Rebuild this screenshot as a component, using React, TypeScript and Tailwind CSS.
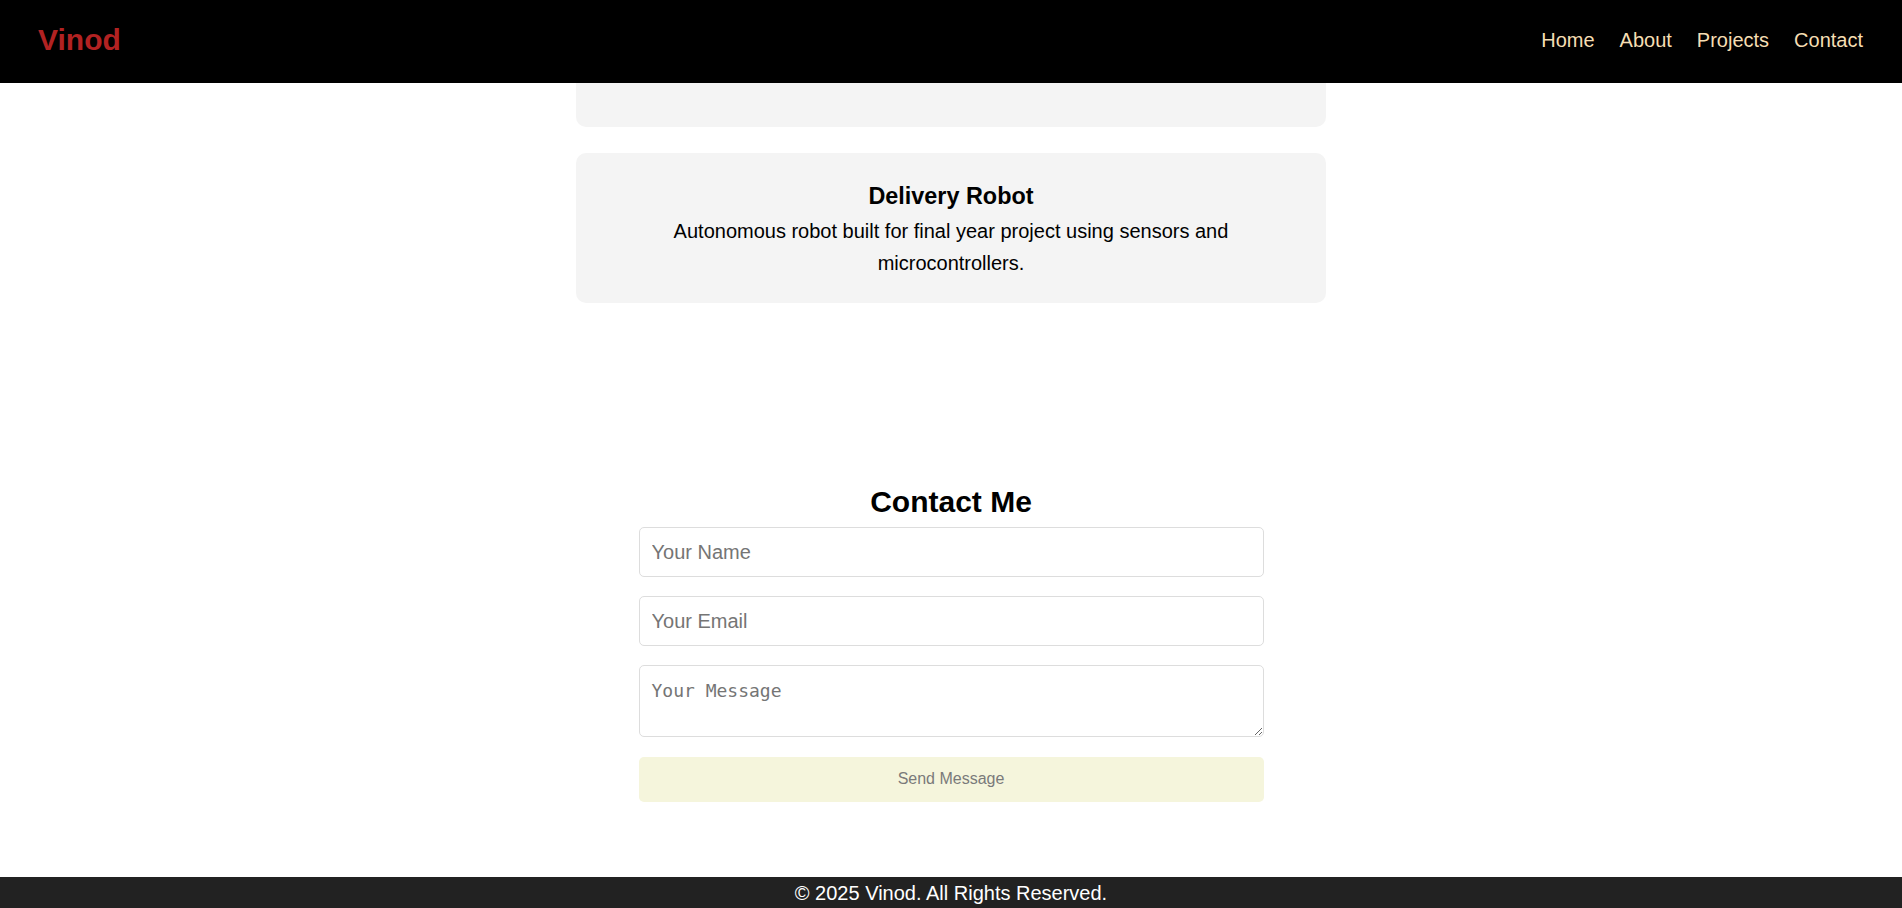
import React from 'react'

const links = ['Home', 'About', 'Projects', 'Contact']

export default function App() {
  return (
    <div className="min-h-screen bg-white text-black font-['Liberation_Sans',Arial,sans-serif]">
      {/* top bar */}
      <header className="h-[83px] bg-black flex items-center justify-between pl-[38px] pr-[39px] pb-1">
        <span className="text-[30px] font-bold text-[#b22222]">Vinod</span>
        <nav className="flex gap-[25px] text-[20px] text-[#f5deb3]">
          {links.map((l) => (
            <a key={l} href="#" className="hover:underline">
              {l}
            </a>
          ))}
        </nav>
      </header>

      <main className="flex flex-col items-center">
        {/* previous project card, cut off under the header */}
        <div className="w-[750px] h-[44px] bg-[#f4f4f4] rounded-b-[10px]" />

        <div className="w-[750px] mt-[26px] bg-[#f4f4f4] rounded-[10px] p-[24px] text-center">
          <h3 className="text-[23.4px] font-bold leading-[38px]">Delivery Robot</h3>
          <p className="text-[20px] leading-[32px]">
            Autonomous robot built for final year project using sensors and microcontrollers.
          </p>
        </div>

        {/* contact */}
        <section className="mt-[175px] w-[625px] flex flex-col">
          <h2 className="text-[30px] font-bold leading-[48px] text-center mb-px">Contact Me</h2>
          <form className="flex flex-col gap-[19px]" onSubmit={(e) => e.preventDefault()}>
            <input
              type="text"
              placeholder="Your Name"
              className="h-[50px] px-[12px] border border-[#ddd] rounded-[5px] text-[20px] placeholder:text-[#757575] outline-none"
            />
            <input
              type="email"
              placeholder="Your Email"
              className="h-[50px] px-[12px] border border-[#ddd] rounded-[5px] text-[20px] placeholder:text-[#757575] outline-none"
            />
            <textarea
              placeholder="Your Message"
              className="h-[72px] px-[12px] pt-[11px] pb-[12px] border border-[#ddd] rounded-[5px] text-[18px] font-['DejaVu_Sans_Mono',monospace] placeholder:text-[#757575] outline-none"
            />
            <button
              type="submit"
              className="mt-px h-[45px] pb-px bg-[#f5f5dc] text-[#7a7a7a] text-[16px] rounded-[5px]"
            >
              Send Message
            </button>
          </form>
        </section>
      </main>

      <footer className="mt-[75px] h-[31px] bg-[#222] text-white text-center text-[20px] leading-[32px] overflow-hidden">
        © 2025 Vinod. All Rights Reserved.
      </footer>
    </div>
  )
}
